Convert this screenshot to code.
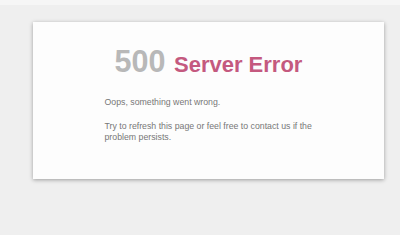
export default function App() {
  return (
    <div
      className="w-[400px] h-[235px] bg-[#efefef] overflow-hidden"
      style={{ fontFamily: '"Liberation Sans", Arial, sans-serif' }}
    >
      <div className="h-[5px] bg-[#f6f6f6]" />
      <div className="ml-[33px] mt-[17px] w-[351px] h-[157px] bg-[#fdfdfd] shadow-[0_1px_4px_rgba(0,0,0,0.35)]">
        <div className="w-[208px] mx-auto pt-[21px]">
          <h1 className="text-center text-[30.5px] font-bold leading-[36px] text-[#b8b8b8] whitespace-nowrap -mx-[20px]">
            500 <span className="text-[22px] text-[#c4597f]">Server Error</span>
          </h1>
          <p className="mt-[14px] text-[8.75px] leading-[11px] text-[#777]">
            Oops, something went wrong.
          </p>
          <p className="mt-[13px] text-[8.75px] leading-[11px] text-[#777]">
            Try to refresh this page or feel free to contact us if the problem persists.
          </p>
        </div>
      </div>
    </div>
  );
}
